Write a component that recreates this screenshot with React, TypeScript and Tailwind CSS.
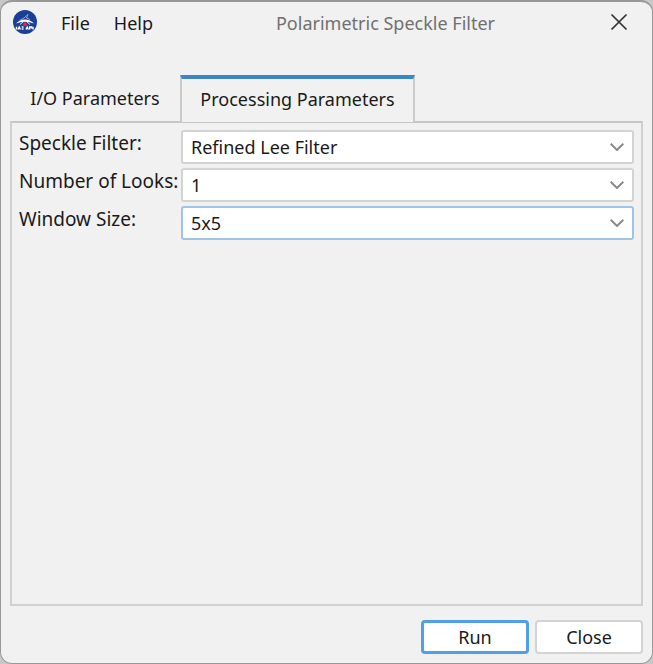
import { useState } from 'react';

const menus = ['File', 'Help'];
const tabs = ['I/O Parameters', 'Processing Parameters'];

const fields = [
  {
    id: 'filter',
    label: 'Speckle Filter:',
    value: 'Refined Lee Filter',
    options: ['Refined Lee Filter', 'Boxcar Filter', 'IDAN Filter'],
  },
  { id: 'looks', label: 'Number of Looks:', value: '1', options: ['1', '2', '3', '4'] },
  { id: 'window', label: 'Window Size:', value: '5x5', options: ['5x5', '7x7', '9x9', '11x11'] },
];

function AppLogo() {
  return (
    <svg viewBox="0 0 24 24" className="-mt-1 h-6 w-6" aria-hidden="true">
      <circle cx="12" cy="12" r="12" fill="#1b3f94" />
      <path d="M6.500 10.500L11 8L15 4.500L13.500 8L17 9.500" fill="none" stroke="#8fa6d8" strokeWidth="1" />
      <path d="M3 13.500Q7 9.500 12 9.500Q17 9.500 21 13.500Q16.500 11.800 12 11.800Q7.500 11.800 3 13.500Z" fill="#fff" />
      <path d="M7 14.500L10.500 11.500M17 14.500L13.500 11.500" stroke="#dfe6f6" strokeWidth="1" />
      <circle cx="12" cy="14.200" r="1.900" fill="#f0233a" />
      <path
        d="M3.500 16.700V19.500M5 19.500L6.200 17L7.400 19.500M8.700 17H10.500M8.700 19H10.500M13 19.500L14.200 17L15.400 19.500M16.700 19.500V17H18.500V18.500M20 16.700V19.500"
        fill="none"
        stroke="#fff"
        strokeWidth="1.400"
      />
    </svg>
  );
}

function SelectField({ id, label, value, options }: (typeof fields)[number]) {
  const focused = id === 'window';
  return (
    <div className="flex items-start">
      <label htmlFor={id} className="w-[162px] shrink-0 whitespace-nowrap text-[19px] leading-[26px]">
        {label}
      </label>
      <div className="grid flex-1 items-center">
        <select
          id={id}
          defaultValue={value}
          className={
            focused
              ? 'col-start-1 row-start-1 h-[34px] w-full appearance-none rounded-[3px] border-2 border-[#a0c4e6] bg-white pl-2 pr-9 outline-none'
              : 'col-start-1 row-start-1 h-[34px] w-full appearance-none rounded-[3px] border-2 border-[#d3d3d3] bg-white pl-2 pr-9 outline-none'
          }
        >
          {options.map((option) => (
            <option key={option}>{option}</option>
          ))}
        </select>
        <svg
          viewBox="0 0 14 8"
          className="pointer-events-none col-start-1 row-start-1 mr-[10px] h-2 w-[14px] justify-self-end"
          fill="none"
          stroke="#8a8a8a"
          strokeWidth="2"
          aria-hidden="true"
        >
          <path d="M0.700 0.700L7 7L13.300 0.700" />
        </svg>
      </div>
    </div>
  );
}

export default function App() {
  const [active, setActive] = useState(tabs[1]);

  return (
    <div className="min-h-dvh bg-[#c8c8c8] font-['Noto_Sans',sans-serif] text-lg leading-6 text-[#1a1a1a]">
      <div className="flex min-h-dvh flex-col rounded-xl border border-t-2 border-[#999] bg-[#f1f1f1]">
        <header className="flex h-11 items-center pl-3 pr-6">
          <AppLogo />
          <nav className="ml-6 flex gap-6">
            {menus.map((menu) => (
              <button key={menu} type="button" className="pb-[2px]">
                {menu}
              </button>
            ))}
          </nav>
          <h1 className="flex-1 pb-[2px] pl-2 text-center text-[#707070]">Polarimetric Speckle Filter</h1>
          <button type="button" aria-label="Close window">
            <svg
              viewBox="0 0 18 18"
              className="-mt-1 h-[18px] w-[18px]"
              stroke="#333"
              strokeWidth="1.700"
              aria-hidden="true"
            >
              <path d="M1.500 1.500L16.500 16.500M16.500 1.500L1.500 16.500" />
            </svg>
          </button>
        </header>

        <main className="mt-[29px] flex flex-1 flex-col px-[9px]">
          <div role="tablist" className="flex">
            {tabs.map((tab) => (
              <button
                key={tab}
                type="button"
                role="tab"
                aria-selected={tab === active}
                onClick={() => setActive(tab)}
                className={
                  tab === active
                    ? 'z-10 -mb-px h-[47px] w-[235px] border-x-2 border-t-4 border-x-[#cbcbcb] border-t-[#3c86c8] bg-[#f1f1f1] pb-1 whitespace-nowrap'
                    : 'h-[46px] w-[170px] whitespace-nowrap'
                }
              >
                {tab}
              </button>
            ))}
          </div>

          <form
            role="tabpanel"
            className="flex flex-1 flex-col gap-1 border-2 border-[#d0d0d0] border-t-[#c6c6c6] px-[7px] pt-[7px]"
          >
            {fields.map((field) => (
              <SelectField key={field.id} {...field} />
            ))}
          </form>
        </main>

        <footer className="flex justify-end gap-[6px] px-[9px] pb-[9px] pt-[14px]">
          <button type="button" className="h-[34px] w-[108px] rounded-[4px] border-[3px] border-[#509fe8] bg-white">
            Run
          </button>
          <button type="button" className="h-[34px] w-[108px] rounded-[4px] border-2 border-[#d3d3d3] bg-white">
            Close
          </button>
        </footer>
      </div>
    </div>
  );
}
